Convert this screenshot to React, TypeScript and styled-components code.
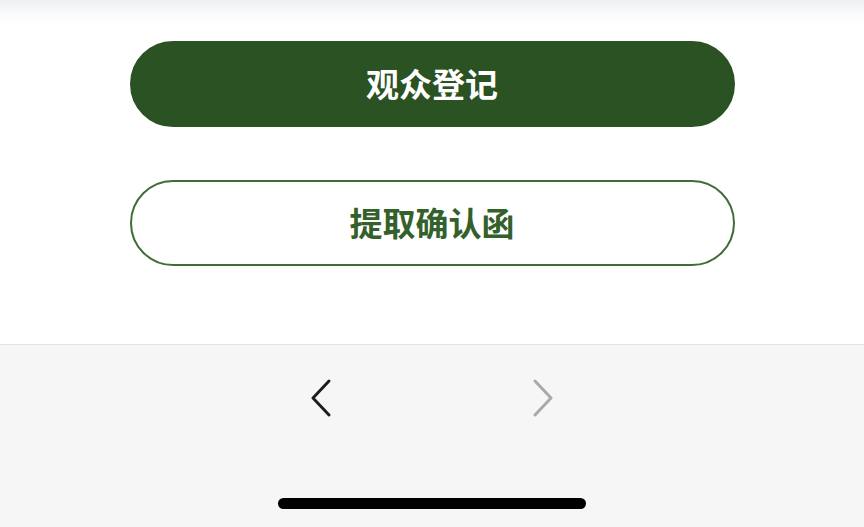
import React from "react";
import styled, { createGlobalStyle } from "styled-components";

const GlobalStyle = createGlobalStyle`
  html, body {
    margin: 0;
    padding: 0;
    background: #ffffff;
    font-family: "Noto Sans CJK SC", "Noto Sans", sans-serif;
  }
  #root {
    height: 527px;
  }
`;

const Page = styled.div`
  width: 864px;
  height: 527px;
  display: flex;
  flex-direction: column;
  overflow: hidden;
`;

const Content = styled.section`
  height: 344px;
  box-sizing: border-box;
  padding-top: 41px;
  display: flex;
  flex-direction: column;
  align-items: center;
  gap: 53px;
  background: linear-gradient(
    to bottom,
    #edf1f4 0px,
    #f6f8fa 10px,
    #ffffff 24px,
    #ffffff 100%
  );
`;

const PillButton = styled.button<{ $primary?: boolean }>`
  width: 605px;
  height: 86px;
  box-sizing: border-box;
  border-radius: 43px;
  border: 2px solid ${(p) => (p.$primary ? "#2a5223" : "#416c38")};
  background: ${(p) => (p.$primary ? "#2a5223" : "#ffffff")};
  color: ${(p) => (p.$primary ? "#ffffff" : "#33602b")};
  font-family: "Noto Sans CJK SC", "Noto Sans", sans-serif;
  font-size: 33px;
  font-weight: 600;
  display: flex;
  align-items: center;
  justify-content: center;
  padding: 0 0 2px;
  cursor: pointer;
`;

const Toolbar = styled.footer`
  flex: 1;
  background: #f6f6f6;
  border-top: 1px solid #e2e2e2;
  display: flex;
  flex-direction: column;
  align-items: center;
`;

const NavRow = styled.div`
  display: flex;
  align-items: center;
  gap: 202px;
  margin-top: 34px;
`;

const NavButton = styled.span<{ $disabled?: boolean }>`
  width: 21px;
  height: 38px;
  display: flex;
  color: ${(p) => (p.$disabled ? "#a9a9a9" : "#1c1c1c")};
`;

const HomeIndicator = styled.div`
  width: 308px;
  height: 11px;
  border-radius: 6px;
  background: #000000;
  margin-top: 81px;
`;

const Chevron = ({ dir }: { dir: "left" | "right" }) => (
  <svg width="21" height="38" viewBox="0 0 21 38" fill="none">
    <path
      d={dir === "left" ? "M19 2 L3 19 L19 36" : "M2 2 L18 19 L2 36"}
      stroke="currentColor"
      strokeWidth="2.9"
      strokeLinecap="round"
      strokeLinejoin="round"
    />
  </svg>
);

export default function App() {
  return (
    <Page>
      <GlobalStyle />
      <Content>
        <PillButton $primary>观众登记</PillButton>
        <PillButton>提取确认函</PillButton>
      </Content>
      <Toolbar>
        <NavRow>
          <NavButton>
            <Chevron dir="left" />
          </NavButton>
          <NavButton $disabled>
            <Chevron dir="right" />
          </NavButton>
        </NavRow>
        <HomeIndicator />
      </Toolbar>
    </Page>
  );
}
